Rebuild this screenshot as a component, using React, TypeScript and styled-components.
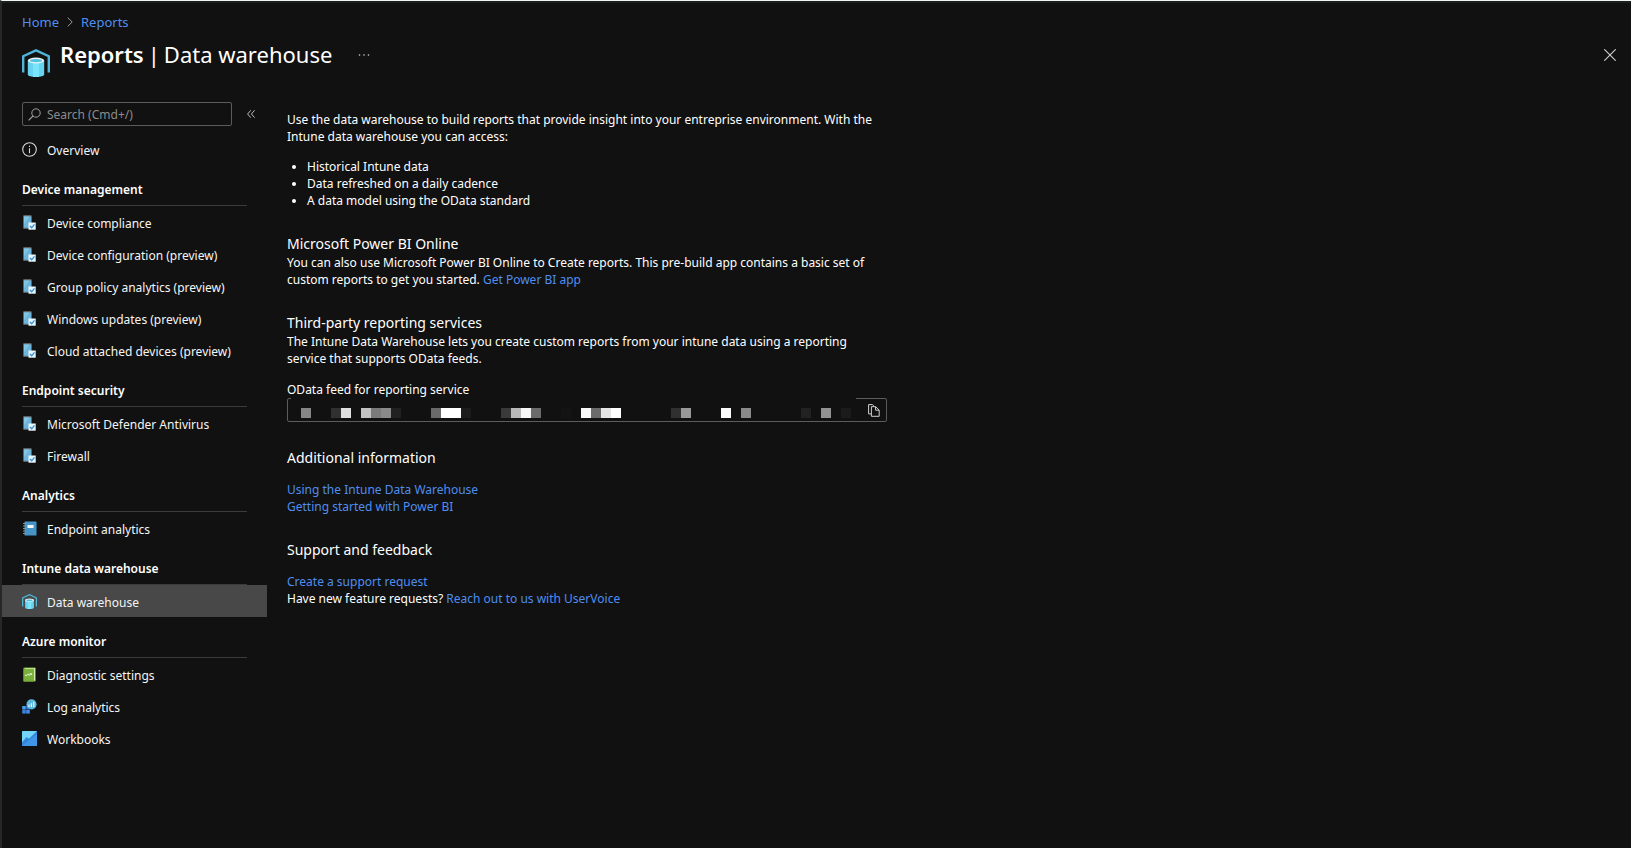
import React from "react";
import styled, { createGlobalStyle } from "styled-components";

const GlobalStyle = createGlobalStyle`
  *, *::before, *::after { box-sizing: border-box; }
  body {
    margin: 0;
    background: #111111;
    color: #ffffff;
    font-family: "Noto Sans", "Open Sans", sans-serif;
    font-size: 12px;
    line-height: 17px;
  }
`;

const Page = styled.div`
  min-height: 100vh;
  border-top: 1px solid #f2f5f4;
  border-left: 2px solid #272727;
  box-shadow: inset 0 2px 0 #1a201e;
  padding-top: 11px;
`;

const Link = styled.a`
  color: #4f8ef0;
  text-decoration: none;
  &:hover { text-decoration: underline; }
`;

const Breadcrumb = styled.nav`
  display: flex;
  align-items: center;
  gap: 8px;
  height: 20px;
  padding-left: 20px;
  font-size: 13px;
`;

const Header = styled.header`
  display: flex;
  align-items: flex-start;
  height: 66px;
  padding: 4px 13px 0 20px;
`;

const HeaderIcon = styled.span`
  display: flex;
  margin: 13px 10px 0 0;
`;

const Title = styled.h1`
  display: flex;
  gap: 4px;
  margin: 0;
  font-size: 22px;
  line-height: 36px;
  font-weight: 400;
  b { font-weight: 600; }
`;

const IconButton = styled.button`
  display: flex;
  align-items: center;
  justify-content: center;
  width: 16px;
  height: 24px;
  padding: 0;
  border: 0;
  background: none;
  color: #d0d0d0;
  cursor: pointer;
`;

const MoreButton = styled(IconButton)`
  margin: 7px auto 0 24px;
`;

const CloseButton = styled(IconButton)`
  margin-top: 7px;
`;

const Columns = styled.div`
  display: flex;
  align-items: flex-start;
`;

const Sidebar = styled.aside`
  flex: 0 0 265px;
  padding-top: 4px;
`;

const SearchRow = styled.div`
  display: flex;
  align-items: center;
  gap: 11px;
  padding-left: 20px;
  margin-bottom: 7px;
`;

const SearchBox = styled.label`
  display: flex;
  align-items: center;
  gap: 6px;
  width: 210px;
  height: 24px;
  padding: 0 5px;
  border: 1px solid #5c5c5c;
  border-radius: 2px;
  color: #a0a0a0;
`;

const SearchInput = styled.input`
  flex: 1;
  min-width: 0;
  padding: 0;
  border: 0;
  outline: 0;
  background: none;
  color: #ffffff;
  font: inherit;
  &::placeholder { color: #8c8c8c; opacity: 1; }
`;

const NavHeading = styled.h2`
  height: 41px;
  margin: 0 20px;
  padding: 16px 0 7px;
  border-bottom: 1px solid #3b3b3b;
  font-size: 12px;
  line-height: 17px;
  font-weight: 600;
`;

const NavList = styled.ul`
  margin: 0;
  padding: 0;
  list-style: none;
`;

const NavItem = styled.a<{ $active?: boolean }>`
  display: flex;
  align-items: center;
  gap: 10px;
  height: 32px;
  padding-left: 20px;
  background: ${(p) => (p.$active ? "#484848" : "none")};
  color: #f5f5f5;
  text-decoration: none;
  svg { flex: none; }
`;

const NavText = styled.span`
  padding-top: 2px;
`;

const Content = styled.main`
  flex: 1;
  min-width: 0;
  padding: 13px 20px 40px;
`;

const Body = styled.div`
  max-width: 600px;
`;

const Text = styled.p`
  margin: 0;
`;

const Bullets = styled.ul`
  margin: 13px 0 0;
  padding-left: 20px;
`;

const Section = styled.section`
  margin-top: 25px;
`;

const SectionTitle = styled.h2<{ $spaced?: boolean }>`
  margin: 0 0 ${(p) => (p.$spaced ? 13 : 0)}px;
  font-size: 14px;
  line-height: 20px;
  font-weight: 400;
`;

const FieldLabel = styled.label`
  display: block;
  margin-top: 15px;
  line-height: 16px;
`;

const FeedField = styled.div`
  position: relative;
  display: flex;
  align-items: center;
  height: 24px;
  margin-bottom: 26px;
  padding-right: 4px;
  border: 1px solid #5c5c5c;
  border-radius: 2px;
`;

const FeedInput = styled.input`
  flex: 1;
  min-width: 0;
  height: 20px;
  padding: 0 8px;
  border: 0;
  outline: 0;
  background: none;
  color: #ffffff;
  font: inherit;
`;

/* Covers the hidden address and the part of the frame above it. */
const Redaction = styled.svg`
  position: absolute;
  left: 3px;
  top: -2px;
  pointer-events: none;
`;

const WarehouseIcon = ({ size }: { size: number }) => (
  <svg width={size} height={size} viewBox="0 0 28 28" aria-hidden="true">
    <path d="M1.200 23.500V7.200L14 1.300l12.800 5.900v16.300" fill="none" stroke="#4fb4d8" strokeWidth="2.400" />
    <path d="M5.800 11.500v14c0 1.500 3.700 2.500 8.200 2.500s8.200-1 8.200-2.500v-14z" fill="#66d3f0" />
    <path d="M11 13h6v15h-6z" fill="#7ae4fb" />
    <ellipse cx="14" cy="11.500" rx="8.200" ry="2.900" fill="#e9f2f5" />
    <ellipse cx="14" cy="11.700" rx="6.200" ry="1.600" fill="#4cc2e2" />
  </svg>
);

const DeviceIcon = () => (
  <svg width="15" height="15" viewBox="0 0 15 15" aria-hidden="true">
    <rect x="1.200" y="0.300" width="8.400" height="13.500" rx="0.700" fill="#747b7f" />
    <rect x="2" y="1.500" width="7.200" height="11.200" fill="#6cb6dc" />
    <path d="M2 1.500h5.300L2 9z" fill="#84c5e4" />
    <rect x="6.500" y="7.500" width="7.200" height="7.200" fill="#e8f5fc" />
    <path d="M8 11l1.700 1.800 2.800-3.500" fill="none" stroke="#2f8fd0" strokeWidth="1.300" />
  </svg>
);

const InfoIcon = () => (
  <svg width="15" height="15" viewBox="0 0 15 15" aria-hidden="true">
    <circle cx="7.500" cy="7.500" r="6.800" fill="none" stroke="#d8d8d8" strokeWidth="1.100" />
    <path d="M7.500 6.300v5M7.500 3.700v1.300" stroke="#d8d8d8" strokeWidth="1.100" />
  </svg>
);

const NotebookIcon = () => (
  <svg width="15" height="15" viewBox="0 0 15 15" aria-hidden="true">
    <rect x="2.500" y="0.500" width="12" height="14" rx="0.500" fill="#4595c8" />
    <path d="M1 2.500h3M1 5h3M1 7.500h3M1 10h3M1 12.500h3" stroke="#8a8f93" strokeWidth="1" />
    <rect x="5.500" y="4" width="6" height="3" fill="#f0f8fc" />
  </svg>
);

const DiagnosticIcon = () => (
  <svg width="15" height="15" viewBox="0 0 15 15" aria-hidden="true">
    <rect x="1.500" y="0.500" width="12.200" height="14" rx="0.800" fill="#79b23a" />
    <path d="M3 1.300h10v12.200h-1V2.300H3z" fill="#d4ecae" />
    <rect x="1.500" y="2.300" width="10.300" height="12.200" rx="0.500" fill="#79b03c" />
    <path d="M3 8.300h2l1.500-1.500.7 1.700L9.200 6l-.4 1.400h1.400" fill="none" stroke="#e9f7d6" strokeWidth="1" />
  </svg>
);

const LogIcon = () => (
  <svg width="15" height="15" viewBox="0 0 15 15" aria-hidden="true">
    <rect x="0.200" y="7" width="3.600" height="3.600" fill="#4a9df0" />
    <rect x="0.200" y="11" width="3.600" height="3.600" fill="#3b7fe0" />
    <rect x="4.200" y="11" width="3.600" height="3.600" fill="#3f8bea" />
    <rect x="4.200" y="7" width="3.600" height="3.600" fill="#2f6fd0" />
    <circle cx="9.500" cy="5.300" r="5.100" fill="#58b8e0" />
    <path d="M7 8V5.500M9.400 8V4.300M11.800 8V2.800" stroke="#e8f7fd" strokeWidth="1.200" />
  </svg>
);

const WorkbookIcon = () => (
  <svg width="15" height="15" viewBox="0 0 15 15" aria-hidden="true">
    <rect width="15" height="15" rx="0.600" fill="#72d4f7" />
    <path d="M0 11.500L4.500 6l2.500 1.800L14 1l1-.4V14.400a.6.6 0 0 1-.6.6H.6a.6.6 0 0 1-.6-.6z" fill="#3486dd" />
    <path d="M0 15L15 3v11.400a.6.6 0 0 1-.6.600z" fill="#3f97e8" />
  </svg>
);

/* One block of the redaction: [left, grey level]. */
const BLOCKS: [number, string][] = [
  [10, "#868686"], [40, "#303030"], [50, "#dfdfdf"], [70, "#c2c2c2"], [80, "#7a7a7a"],
  [90, "#8a8a8a"], [100, "#212121"], [140, "#6a6a6a"], [150, "#ffffff"], [160, "#ffffff"],
  [170, "#1c1c1c"], [210, "#3a3a3a"], [220, "#b8b8b8"], [230, "#f6f6f6"], [240, "#6b6b6b"],
  [270, "#141414"], [290, "#f8f8f8"], [300, "#6b6b6b"], [310, "#e5e5e5"], [320, "#ffffff"],
  [380, "#303030"], [390, "#999999"], [430, "#fafafa"], [450, "#8a8a8a"], [510, "#222222"],
  [530, "#929292"], [550, "#1b1b1b"],
];

const NAV: { heading: string; items: { text: string; icon: React.ReactNode; active?: boolean }[] }[] = [
  {
    heading: "Device management",
    items: [
      { text: "Device compliance", icon: <DeviceIcon /> },
      { text: "Device configuration (preview)", icon: <DeviceIcon /> },
      { text: "Group policy analytics (preview)", icon: <DeviceIcon /> },
      { text: "Windows updates (preview)", icon: <DeviceIcon /> },
      { text: "Cloud attached devices (preview)", icon: <DeviceIcon /> },
    ],
  },
  {
    heading: "Endpoint security",
    items: [
      { text: "Microsoft Defender Antivirus", icon: <DeviceIcon /> },
      { text: "Firewall", icon: <DeviceIcon /> },
    ],
  },
  { heading: "Analytics", items: [{ text: "Endpoint analytics", icon: <NotebookIcon /> }] },
  {
    heading: "Intune data warehouse",
    items: [{ text: "Data warehouse", icon: <WarehouseIcon size={15} />, active: true }],
  },
  {
    heading: "Azure monitor",
    items: [
      { text: "Diagnostic settings", icon: <DiagnosticIcon /> },
      { text: "Log analytics", icon: <LogIcon /> },
      { text: "Workbooks", icon: <WorkbookIcon /> },
    ],
  },
];

export default function App() {
  return (
    <>
      <GlobalStyle />
      <Page>
        <Breadcrumb aria-label="Breadcrumb">
          <Link href="#home">Home</Link>
          <svg width="6" height="10" viewBox="0 0 6 10" aria-hidden="true">
            <path d="M.7.600L5.200 5 .7 9.400" fill="none" stroke="#9a9a9a" />
          </svg>
          <Link href="#reports">Reports</Link>
        </Breadcrumb>
        <Header>
          <HeaderIcon><WarehouseIcon size={28} /></HeaderIcon>
          <Title><b>Reports</b><span>|</span><span>Data warehouse</span></Title>
          <MoreButton aria-label="More actions">
            <svg width="12" height="2" viewBox="0 0 12 2" fill="currentColor">
              <circle cx="1.500" cy="1" r="0.800" /><circle cx="6" cy="1" r="0.800" /><circle cx="10.500" cy="1" r="0.800" />
            </svg>
          </MoreButton>
          <CloseButton aria-label="Close">
            <svg width="12" height="12" viewBox="0 0 12 12">
              <path d="M.3.300l11.400 11.400M11.700.300L.3 11.700" stroke="currentColor" strokeWidth="1.100" />
            </svg>
          </CloseButton>
        </Header>
        <Columns>
          <Sidebar>
            <SearchRow>
              <SearchBox>
                <svg width="13" height="13" viewBox="0 0 13 13" aria-hidden="true">
                  <circle cx="8" cy="5" r="4.200" fill="none" stroke="currentColor" />
                  <path d="M5 8L.6 12.400" stroke="currentColor" strokeWidth="1.200" />
                </svg>
                <SearchInput type="text" placeholder="Search (Cmd+/)" aria-label="Search" />
              </SearchBox>
              <IconButton aria-label="Collapse menu">
                <svg width="8" height="8" viewBox="0 0 8 8">
                  <path d="M3.800.300L.6 4l3.200 3.700M7.600.300L4.400 4l3.200 3.700" fill="none" stroke="currentColor" strokeWidth="0.900" />
                </svg>
              </IconButton>
            </SearchRow>
            <nav aria-label="Reports">
              <NavItem href="#overview"><InfoIcon /><NavText>Overview</NavText></NavItem>
              {NAV.map((group) => (
                <React.Fragment key={group.heading}>
                  <NavHeading>{group.heading}</NavHeading>
                  <NavList>
                    {group.items.map((item) => (
                      <li key={item.text}>
                        <NavItem href="#item" $active={item.active} aria-current={item.active ? "page" : undefined}>
                          {item.icon}<NavText>{item.text}</NavText>
                        </NavItem>
                      </li>
                    ))}
                  </NavList>
                </React.Fragment>
              ))}
            </nav>
          </Sidebar>
          <Content>
            <Body>
              <Text>
                Use the data warehouse to build reports that provide insight into your entreprise environment. With the
                Intune data warehouse you can access:
              </Text>
              <Bullets>
                <li>Historical Intune data</li>
                <li>Data refreshed on a daily cadence</li>
                <li>A data model using the OData standard</li>
              </Bullets>
              <Section>
                <SectionTitle>Microsoft Power BI Online</SectionTitle>
                <Text>
                  You can also use Microsoft Power BI Online to Create reports. This pre-build app contains a basic set of
                  custom reports to get you started. <Link href="#power-bi">Get Power BI app</Link>
                </Text>
              </Section>
              <Section>
                <SectionTitle>Third-party reporting services</SectionTitle>
                <Text>
                  The Intune Data Warehouse lets you create custom reports from your intune data using a reporting
                  service that supports OData feeds.
                </Text>
                <FieldLabel htmlFor="feed">OData feed for reporting service</FieldLabel>
                <FeedField>
                  <FeedInput id="feed" type="text" readOnly />
                  <Redaction width="565" height="23" viewBox="0 0 565 23" aria-hidden="true">
                    <rect width="565" height="23" fill="#111111" />
                    {BLOCKS.map(([x, fill]) => (
                      <rect key={x} x={x} y="11" width="10" height="10" fill={fill} />
                    ))}
                  </Redaction>
                  <IconButton aria-label="Copy to clipboard">
                    <svg width="12" height="13" viewBox="0 0 12 13" fill="none" stroke="currentColor">
                      <path d="M3 9.900H.600V.600h3.800L6 2.200" />
                      <path d="M3.400 2.700h4.300l3.500 3.400v6.200H3.400zM7.600 2.900v3.300h3.400" />
                    </svg>
                  </IconButton>
                </FeedField>
              </Section>
              <Section>
                <SectionTitle $spaced>Additional information</SectionTitle>
                <Text><Link href="#using">Using the Intune Data Warehouse</Link></Text>
                <Text><Link href="#getting-started">Getting started with Power BI</Link></Text>
              </Section>
              <Section>
                <SectionTitle $spaced>Support and feedback</SectionTitle>
                <Text><Link href="#support">Create a support request</Link></Text>
                <Text>Have new feature requests? <Link href="#uservoice">Reach out to us with UserVoice</Link></Text>
              </Section>
            </Body>
          </Content>
        </Columns>
      </Page>
    </>
  );
}
